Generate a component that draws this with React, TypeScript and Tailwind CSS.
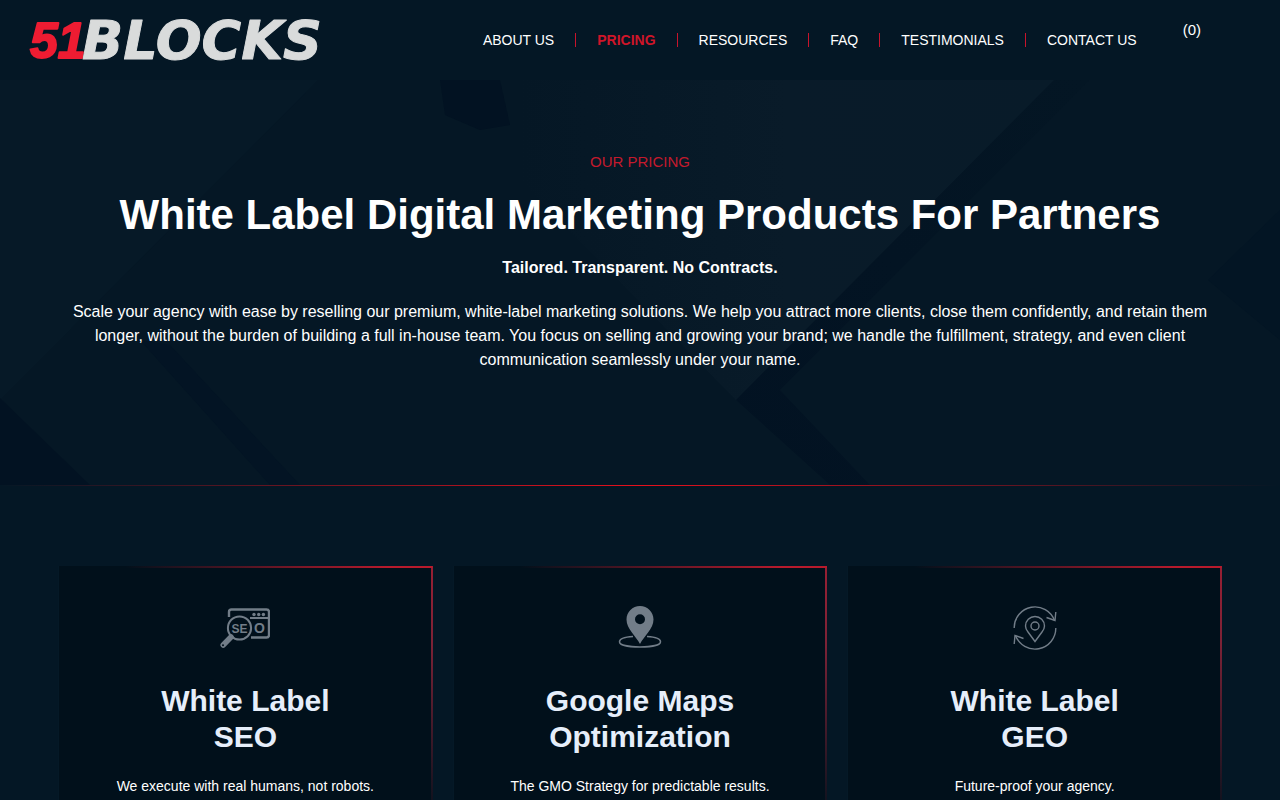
import type { ReactNode } from "react";
import { clsx } from "clsx";

const navItems = [
  { title: "About Us", href: "#about" },
  { title: "Pricing", href: "#pricing" },
  { title: "Resources", href: "#resources" },
  { title: "FAQ", href: "#faq" },
  { title: "Testimonials", href: "#testimonials" },
  { title: "Contact Us", href: "#contact" },
];

const Logo = () => (
  <a href="#home" className="shrink-0">
    <svg width="322" height="44" viewBox="0 0 322 44" className="block overflow-visible">
      <text
        x="0"
        y="40"
        fill="#ee1c32"
        stroke="#ee1c32"
        strokeWidth="2"
        strokeLinejoin="round"
        fontFamily="'Liberation Sans', Arial, sans-serif"
        fontWeight="700"
        fontStyle="italic"
        fontSize="50"
      >
        51
      </text>
      <text
        x="52"
        y="41"
        fill="#d9dbdb"
        stroke="#d9dbdb"
        strokeWidth="1"
        strokeLinejoin="round"
        fontFamily="'DejaVu Sans', Verdana, sans-serif"
        fontWeight="700"
        fontStyle="italic"
        fontSize="54"
      >
        BLOCKS
      </text>
    </svg>
  </a>
);

const Header = () => (
  <header className="flex h-20 items-center justify-between bg-[#041725] pl-[30px] pr-[79px]">
    <Logo />
    <div className="flex items-center gap-[25px]">
      <nav className="flex items-center">
        {navItems.map((item, idx) => (
          <a
            key={item.title}
            href={item.href}
            className={clsx(
              "px-[21px] text-sm leading-[14px] whitespace-nowrap uppercase",
              idx < navItems.length - 1 && "border-r border-[#c8142c]",
              item.title === "Pricing" ? "font-bold text-[#cf1529]" : "text-white"
            )}
          >
            {item.title}
          </a>
        ))}
      </nav>
      <a href="#cart" className="pb-5 text-[15px] leading-5 text-white">
        (0)
      </a>
    </div>
  </header>
);

// Faint angular shapes behind the hero copy
const HeroShapes = () => (
  <svg
    className="absolute inset-0 h-full w-full"
    viewBox="0 0 1280 405"
    preserveAspectRatio="none"
    aria-hidden="true"
  >
    <defs>
      <linearGradient id="panel" x1="0" y1="0" x2="1" y2="0">
        <stop offset="0" stopColor="#091b29" stopOpacity="0" />
        <stop offset="0.5" stopColor="#091b29" />
        <stop offset="1" stopColor="#081b29" />
      </linearGradient>
      <linearGradient id="shade" x1="0" y1="1" x2="1" y2="0">
        <stop offset="0" stopColor="#021222" />
        <stop offset="1" stopColor="#041624" />
      </linearGradient>
    </defs>
    <polygon points="0,0 318,0 60,260 0,320" fill="#061927" />
    <polygon points="520,0 1054,0 736,320 520,100" fill="url(#panel)" />
    <polygon points="1054,0 1090,0 780,310 870,405 830,405 736,320" fill="url(#shade)" />
    <polygon points="440,0 500,0 510,45 480,50 445,35" fill="#021222" />
    <polygon points="0,318 90,405 0,405" fill="#021222" />
    <polygon points="140,260 170,265 300,405 270,405" fill="#031424" />
    <polygon points="1280,130 1280,260 1208,200" fill="#031524" />
  </svg>
);

const Hero = () => (
  <>
    <section className="relative overflow-hidden bg-[#051725]">
      <HeroShapes />
      <div className="relative mx-auto max-w-[1170px] px-3 pt-[72px] pb-[113px] text-center text-white">
        <p className="text-[15px] leading-5 text-[#c41a2d] uppercase">Our Pricing</p>
        <h1 className="mt-4 text-[42px] leading-[54px] font-bold">
          White Label Digital Marketing Products For Partners
        </h1>
        <p className="mt-[14px] text-base font-bold">Tailored. Transparent. No Contracts.</p>
        <p className="mt-5 text-base">
          Scale your agency with ease by reselling our premium, white-label marketing solutions. We help you attract more
          clients, close them confidently, and retain them longer, without the burden of building a full in-house team.
          You focus on selling and growing your brand; we handle the fulfillment, strategy, and even client communication
          seamlessly under your name.
        </p>
      </div>
    </section>
    <div className="h-px bg-[linear-gradient(90deg,#041725,#e8101c,#041725)]" />
  </>
);

const SeoIcon = () => (
  <svg width="50" height="50" viewBox="0 -1 50 50" fill="none" stroke="#727d88" strokeWidth="2">
    <path d="M9 13V8q0-2.500 2.500-2.500H46.500q2.500 0 2.500 2.500V31q0 2.500-2.500 2.500H31" strokeWidth="2.400" />
    <path d="M30 14H48" />
    <g fill="#727d88" stroke="none">
      <circle cx="34" cy="10.500" r="1.700" />
      <circle cx="38.700" cy="10.500" r="1.700" />
      <circle cx="43.400" cy="10.500" r="1.700" />
    </g>
    <circle cx="19.500" cy="24" r="11.600" strokeWidth="2" />
    <path d="M11 33L3.200 41" strokeWidth="5.500" strokeLinecap="round" />
    <circle cx="3" cy="41.200" r="1" fill="#01101b" stroke="none" />
    <g
      fill="#727d88"
      stroke="none"
      fontFamily="'Liberation Sans', Arial, sans-serif"
      fontWeight="700"
      textAnchor="middle"
    >
      <text x="19.500" y="28.500" fontSize="12">
        SE
      </text>
      <text x="39.500" y="29" fontSize="14">
        O
      </text>
    </g>
  </svg>
);

const MapPinIcon = () => (
  <svg width="50" height="50" viewBox="0 0 50 50" fill="none" stroke="#727d88">
    <path
      d="M25 3C17.500 3 11.500 9 11.500 16.500C11.500 26 21 33 25 41C29 33 38.500 26 38.500 16.500C38.500 9 32.500 3 25 3ZM25 11.200a5 5 0 1 1 0 10a5 5 0 0 1 0-10Z"
      fill="#727d88"
      fillRule="evenodd"
      stroke="none"
    />
    <path d="M18 33.500C10 34 4.500 36 4.500 38.700C4.500 42 13.500 44 25 44S45.500 42 45.500 38.700C45.500 36 40 34 32 33.500" strokeWidth="1.500" />
  </svg>
);

const GeoIcon = () => (
  <svg width="50" height="50" viewBox="0 0 50 50" fill="none" stroke="#727d88" strokeWidth="1.400">
    <path d="M4.200 25A20.800 20.800 0 0 1 44.500 17.500" />
    <path d="M45.800 9L45 17.500L36.500 14.500" />
    <path d="M45.800 25A20.800 20.800 0 0 1 5.500 32.500" />
    <path d="M4.200 41L5 32.500L13.500 35.500" />
    <path d="M25 38.500L18 29C16 26.500 15.500 24.800 15.500 23A9.500 9.500 0 0 1 34.500 23C34.500 24.800 34 26.500 32 29Z" />
    <circle cx="25" cy="23" r="4" />
  </svg>
);

type Product = { title: [string, string]; text: string; icon: ReactNode };

const products: Product[] = [
  { title: ["White Label", "SEO"], text: "We execute with real humans, not robots.", icon: <SeoIcon /> },
  { title: ["Google Maps", "Optimization"], text: "The GMO Strategy for predictable results.", icon: <MapPinIcon /> },
  { title: ["White Label", "GEO"], text: "Future-proof your agency.", icon: <GeoIcon /> },
];

const ProductCard = ({ title, text, icon }: Product) => (
  <article className="flex flex-col items-center bg-[#01101b] bg-[image:linear-gradient(90deg,transparent_18%,#b81a2c_88%),linear-gradient(180deg,#981f33,#7c2236_30%,transparent)] bg-[size:100%_2px,2px_260px] bg-[position:top_right,top_right] bg-no-repeat px-6 pt-[37px] pb-20 text-center shadow-[inset_1px_0_#051927]">
    {icon}
    <h2 className="mt-[30px] text-[30px] leading-9 font-bold text-[#e6eefa]">
      {title[0]}
      <br />
      {title[1]}
    </h2>
    <p className="mt-5 text-sm leading-[22px] text-white">{text}</p>
  </article>
);

export default function App() {
  return (
    <div className="min-h-screen bg-[#041725] font-['Liberation_Sans',Arial,sans-serif]">
      <Header />
      <main>
        <Hero />
        <section className="mx-auto grid max-w-[1164px] grid-cols-3 gap-5 py-20">
          {products.map((product) => (
            <ProductCard key={product.text} {...product} />
          ))}
        </section>
      </main>
    </div>
  );
}
